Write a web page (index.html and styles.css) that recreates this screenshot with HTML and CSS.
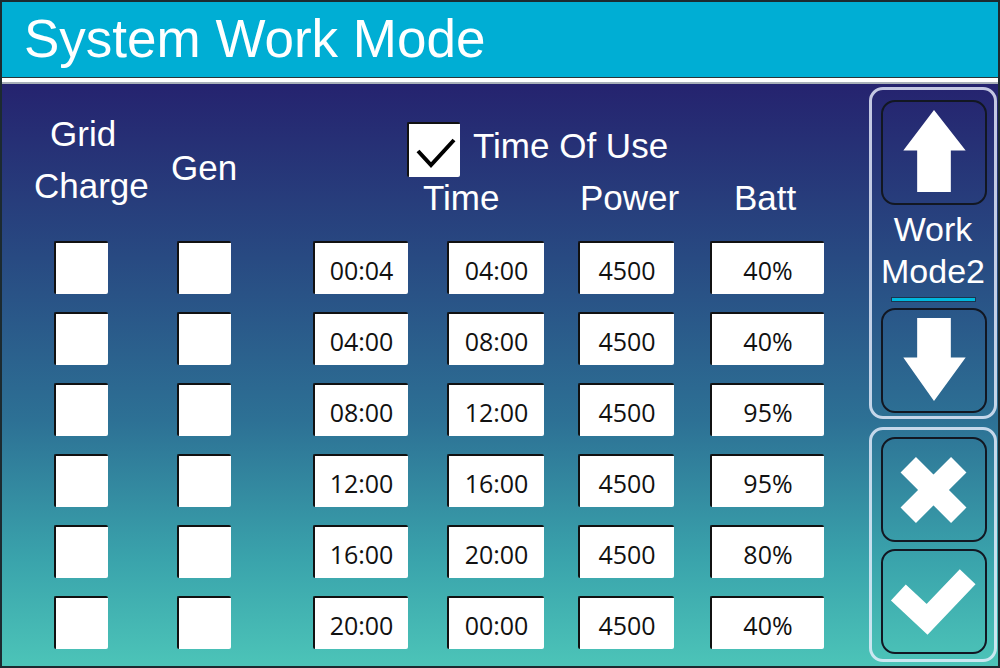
FILE: index.html
```html
<!DOCTYPE html>
<html lang="en">
<head>
  <meta charset="UTF-8" />
  <title>System Work Mode</title>
  <link rel="stylesheet" href="styles.css">
</head>
<body>

<div class="screen">
  <header class="topbar">
    <h1>System Work Mode</h1>
  </header>

  <div class="panel">
    <section class="schedule">
      <div class="head">
        <div class="lbl lbl-grid"><span class="grid-word">Grid</span><br>Charge</div>
        <div class="lbl lbl-gen">Gen</div>
        <div class="tou">
          <span class="check on">
            <svg viewBox="0 0 53 55" width="53" height="55"><polyline points="9,27 22,41 45,16" /></svg>
          </span>
          <span class="lbl">Time Of Use</span>
        </div>
        <div class="lbl lbl-time">Time</div>
        <div class="lbl lbl-power">Power</div>
        <div class="lbl lbl-batt">Batt</div>
      </div>

      <div class="rows">
        <span class="check"></span><span class="check"></span>
        <span class="field f-start">00:04</span><span class="field f-end">04:00</span>
        <span class="field f-power">4500</span><span class="field f-batt">40%</span>

        <span class="check"></span><span class="check"></span>
        <span class="field f-start">04:00</span><span class="field f-end">08:00</span>
        <span class="field f-power">4500</span><span class="field f-batt">40%</span>

        <span class="check"></span><span class="check"></span>
        <span class="field f-start">08:00</span><span class="field f-end">12:00</span>
        <span class="field f-power">4500</span><span class="field f-batt">95%</span>

        <span class="check"></span><span class="check"></span>
        <span class="field f-start">12:00</span><span class="field f-end">16:00</span>
        <span class="field f-power">4500</span><span class="field f-batt">95%</span>

        <span class="check"></span><span class="check"></span>
        <span class="field f-start">16:00</span><span class="field f-end">20:00</span>
        <span class="field f-power">4500</span><span class="field f-batt">80%</span>

        <span class="check"></span><span class="check"></span>
        <span class="field f-start">20:00</span><span class="field f-end">00:00</span>
        <span class="field f-power">4500</span><span class="field f-batt">40%</span>
      </div>
    </section>

    <aside class="side">
      <div class="group group-mode">
        <button class="key" type="button" title="Previous">
          <svg viewBox="0 0 102 102"><polygon points="51,8 83,49 68,49 68,91 34,91 34,49 20,49" /></svg>
        </button>
        <div class="mode-name">Work<br>Mode2</div>
        <div class="mode-bar"></div>
        <button class="key" type="button" title="Next">
          <svg viewBox="0 0 102 102"><polygon points="34,8 68,8 68,48 83,48 51,92 20,48 34,48" /></svg>
        </button>
      </div>
      <div class="group group-act">
        <button class="key" type="button" title="Cancel">
          <svg viewBox="0 0 102 102"><path class="thick" d="M25 26 L76 77 M76 26 L25 77" /></svg>
        </button>
        <button class="key" type="button" title="Save">
          <svg viewBox="0 0 102 102"><polyline class="thick" points="15,42 44,69 85,26" /></svg>
        </button>
      </div>
    </aside>
  </div>
</div>

</body>
</html>
```

FILE: styles.css
```css
body {
  margin: 0;
  background: #fff;
  font-family: 'Liberation Sans', Arial, sans-serif;
}
.screen {
  width: 1000px;
  height: 668px;
  box-sizing: border-box;
  border: 2px solid #1c2a30;
  display: flex;
  flex-direction: column;
  overflow: hidden;
}

/* title bar */
.topbar {
  height: 75px;
  flex: none;
  background-color: #00aed4;
  border-bottom: 1px solid #2a3438;
  box-shadow: 0 4px 0 #fff, 0 6px 0 #a9b0b8;
  margin-bottom: 6px;
  position: relative;
  z-index: 1;
}
.topbar h1 {
  margin: 0;
  padding: 0 0 2px 22px;
  font-weight: normal;
  font-size: 53px;
  line-height: 73px;
  color: #fff;
}

/* main area */
.panel {
  flex: 1;
  display: flex;
  background: linear-gradient(180deg, #25236f 0%, #284a82 30%, #2d7195 58%, #3aa4ac 82%, #4cc4b8 100%);
}
.schedule {
  flex: 1;
  padding-left: 52px;
}
.lbl {
  color: #fff;
  font-size: 35px;
  line-height: 38px;
}
.head {
  display: grid;
  grid-template-columns: 123px 136px 134px 131px 132px 114px;
  grid-template-rows: 93px 64px;
}
.lbl-grid {
  grid-column: 1;
  grid-row: 1 / 3;
  margin-left: -20px;
  padding-top: 24px;
  line-height: 52px;
  white-space: nowrap;
}
.grid-word {
  padding-left: 16px;
}
.lbl-gen {
  grid-column: 2;
  grid-row: 1 / 3;
  margin-left: -6px;
  padding-top: 65px;
}
.tou {
  grid-column: 3 / 7;
  grid-row: 1;
  align-self: end;
  display: flex;
  align-items: center;
  gap: 13px;
  margin-left: 94px;
}
.tou .check {
  width: 53px;
  height: 55px;
}
.tou .lbl {
  margin-bottom: 7px;
}
.check svg {
  display: block;
  fill: none;
  stroke: #000;
  stroke-width: 4;
}
.lbl-time {
  grid-column: 3 / 5;
  grid-row: 2;
  padding: 2px 0 0 110px;
}
.lbl-power {
  grid-column: 5;
  grid-row: 2;
  padding: 2px 0 0 2px;
}
.lbl-batt {
  grid-column: 6;
  grid-row: 2;
  padding: 2px 0 0 24px;
}

/* schedule rows */
.rows {
  display: grid;
  grid-template-columns: 123px 136px 134px 131px 132px 114px;
  grid-auto-rows: 53px;
  row-gap: 18px;
}
.check,
.field {
  box-sizing: border-box;
  background-color: #fff;
  border-top: 2px solid #111;
  border-left: 2px solid #111;
  border-radius: 2px;
}
.rows .check {
  width: 54px;
}
.field {
  display: flex;
  align-items: center;
  justify-content: center;
  padding-top: 2px;
  font-family: 'Open Sans', 'Noto Sans', sans-serif;
  font-size: 25px;
  color: #111;
}
.f-start { width: 95px; }
.f-end { width: 97px; }
.f-power { width: 96px; }
.f-batt { width: 114px; }

/* right hand keys */
.side {
  width: 128px;
  margin-right: 1px;
  padding-top: 3px;
  display: flex;
  flex-direction: column;
  gap: 8px;
}
.group {
  border: 3px solid rgba(235, 240, 255, 0.8);
  border-radius: 14px;
  padding: 10px 7px 3px 9px;
  display: flex;
  flex-direction: column;
}
.group-act {
  padding-top: 7px;
  padding-bottom: 5px;
  gap: 7px;
}
.key {
  width: 106px;
  height: 105px;
  padding: 0;
  background: transparent;
  border: 2px solid #121722;
  border-radius: 14px;
  cursor: pointer;
}
.key svg {
  display: block;
  width: 102px;
  height: 101px;
  fill: #fff;
}
.key .thick {
  fill: none;
  stroke: #fff;
  stroke-width: 22;
}
.mode-name {
  margin-top: 3px;
  color: #fff;
  font-size: 34px;
  line-height: 42px;
  text-align: center;
  padding-right: 2px;
}
.mode-bar {
  width: 83px;
  height: 3px;
  margin: 5px 0 6px 10px;
  background-color: #00b8dc;
  border: 1px solid #1a3550;
}
```
